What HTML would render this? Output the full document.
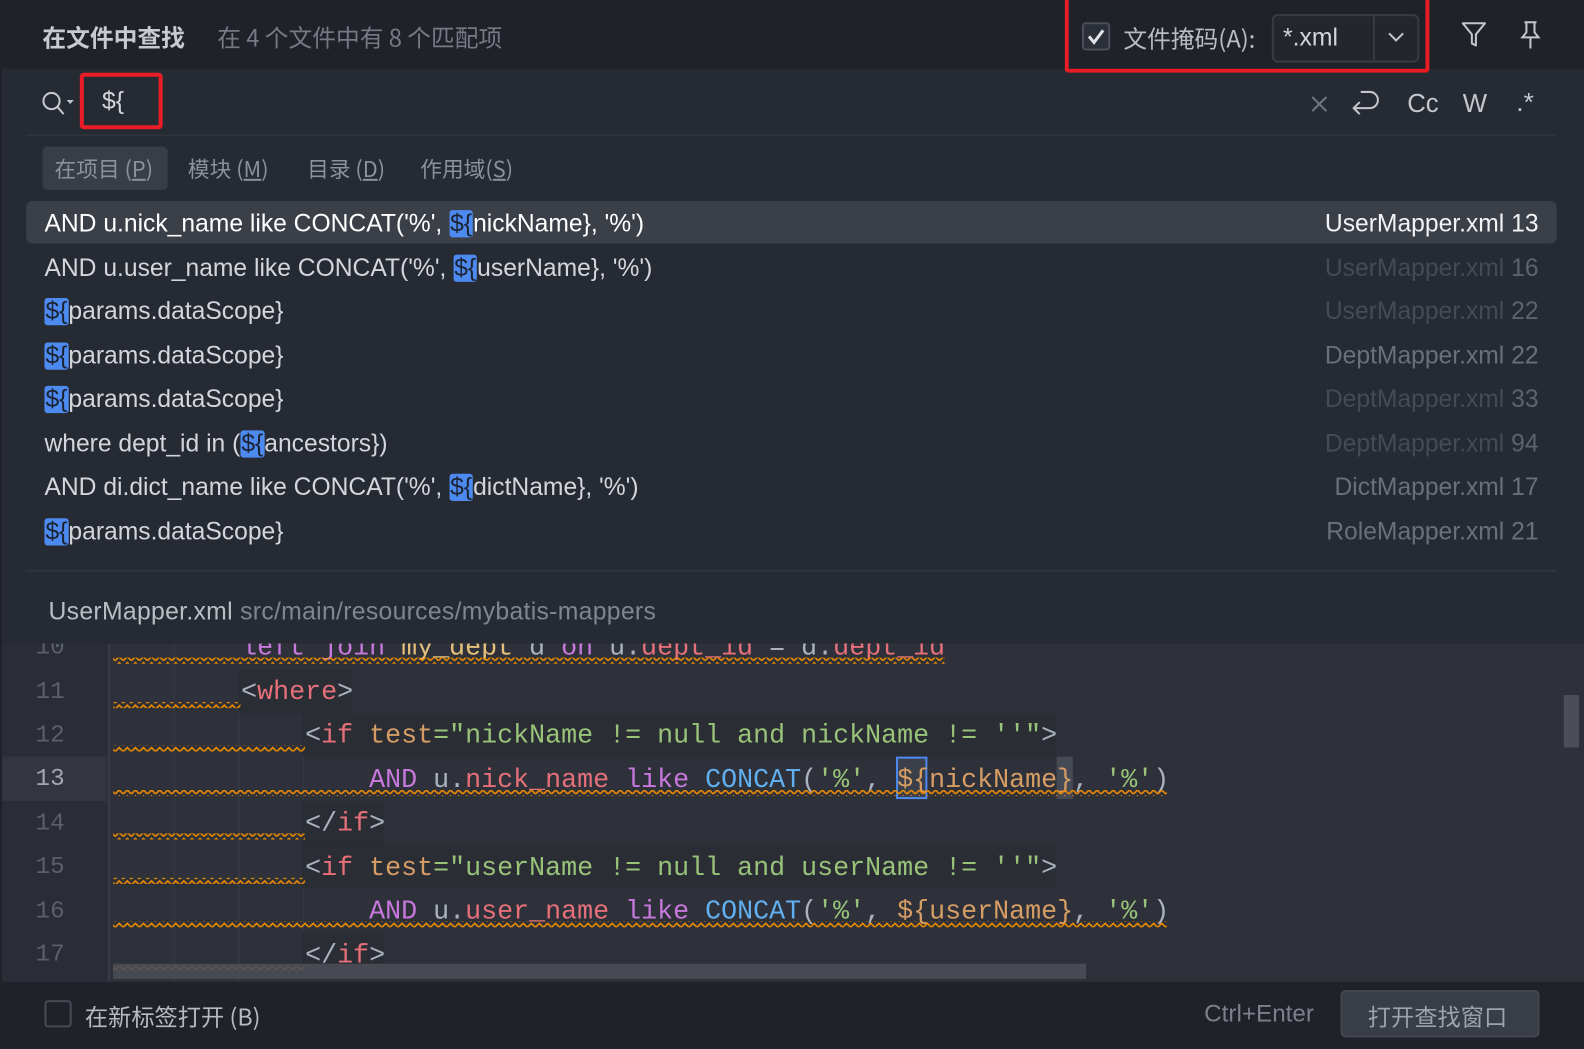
<!DOCTYPE html>
<html><head><meta charset="utf-8"><style>
*{margin:0;padding:0;box-sizing:border-box}
html,body{width:1584px;height:1048px;overflow:hidden;background:#262a32}
#w{position:absolute;left:0;top:0;width:1568px;height:1038px;transform:scale(1.0102);transform-origin:0 0;font-family:"Liberation Sans","Noto Sans CJK SC",sans-serif;color:#d3d6dc}
.a{position:absolute;white-space:pre}
.cjk{font-family:"Noto Sans CJK SC","Liberation Sans",sans-serif}
.row{position:absolute;left:44px;height:43px;line-height:43px;font-size:24.4px;color:#d3d6dc}
.fn{position:absolute;right:45px;height:43px;line-height:43px;font-size:24.4px;color:#6a707b;text-align:right}
.m{background:#4d8af0;color:#1c2330;border-radius:3px;padding:0 1px}
.code{position:absolute;left:112px;font-family:"Liberation Mono",monospace;font-size:26.4px;line-height:43.5px;white-space:pre;color:#abb2bf}
.ln{position:absolute;left:0;width:62px;text-align:right;font-family:"Liberation Mono",monospace;font-size:24px;color:#5a606b;line-height:43.5px}
.t{color:#e5707a}.at{color:#d69d64}.s{color:#98c379}.k{color:#c678dd}.f{color:#61afef}.o{color:#d69d64}.g{color:#abb2bf}
</style></head><body><div id="w">
<div class="a" style="left:0;top:0;width:1568px;height:68px;background:#1f2229"></div>
<div class="a cjk" style="left:42px;top:19px;font-size:23.5px;font-weight:bold;color:#c7cad0">在文件中查找</div>
<div class="a cjk" style="left:215px;top:19px;font-size:23.5px;color:#757a84">在 4 个文件中有 8 个匹配项</div>
<div class="a" style="left:1054px;top:0;width:361px;height:72px;border:4px solid #ea1d27;border-top:none;border-radius:0 0 4px 4px"></div>
<div class="a" style="left:1071px;top:22px;width:28px;height:28px;border:2px solid #4a4f59;border-radius:4px;background:#2b2f37"></div>
<svg class="a" style="left:1073px;top:24px" width="24" height="24"><path d="M5 12 L10 18 L19 6" stroke="#dfe2e6" stroke-width="3" fill="none"/></svg>
<div class="a cjk" style="left:1112px;top:20px;font-size:23.5px;color:#b8bcc3">文件掩码(A):</div>
<div class="a" style="left:1259px;top:14px;width:146px;height:48px;border:2px solid #373b44;border-radius:6px;background:#23262d"></div>
<div class="a" style="left:1359px;top:15px;width:2px;height:46px;background:#373b44"></div>
<div class="a" style="left:1270px;top:24px;font-size:24.5px;color:#d3d6dc">*.xml</div>
<svg class="a" style="left:1372px;top:30px" width="20" height="14"><path d="M3 3 L10 10 L17 3" stroke="#c4c8ce" stroke-width="2" fill="none"/></svg>
<svg class="a" style="left:1446px;top:20px" width="26" height="28"><path d="M2 3 H24 L15 14 V25 L11 23 V14 Z" stroke="#c4c8ce" stroke-width="2" fill="none" stroke-linejoin="round"/></svg>
<svg class="a" style="left:1502px;top:20px" width="26" height="30"><path d="M7 2 H19 M9 2 V12 L5 17 H21 L17 12 V2 M13 17 V28" stroke="#c4c8ce" stroke-width="2" fill="none"/></svg>
<div class="a" style="left:0;top:68px;width:2px;height:970px;background:#1f2229"></div>
<svg class="a" style="left:40px;top:88px" width="36" height="30"><circle cx="11" cy="12" r="8" stroke="#c4c8ce" stroke-width="2" fill="none"/><path d="M17 18 L23 25" stroke="#c4c8ce" stroke-width="2"/><path d="M26 11 H33 L29.5 15 Z" fill="#c4c8ce"/></svg>
<div class="a" style="left:79px;top:72px;width:82px;height:56px;border:4px solid #ea1d27;border-radius:4px"></div>
<div class="a" style="left:101px;top:87px;font-size:24.5px;color:#d3d6dc">${</div>
<svg class="a" style="left:1297px;top:94px" width="18" height="18"><path d="M2 2 L16 16 M16 2 L2 16" stroke="#70757f" stroke-width="2"/></svg>
<svg class="a" style="left:1335px;top:86px" width="32" height="34"><path d="M12 5 H21 A8 8 0 0 1 21 21 H5 M11 15 L5 21 L11 27" stroke="#c4c8ce" stroke-width="2" fill="none"/></svg>
<div class="a" style="left:1393px;top:89px;font-size:25.5px;color:#c4c8ce">Cc</div>
<div class="a" style="left:1448px;top:89px;font-size:25.5px;color:#c4c8ce">W</div>
<div class="a" style="left:1501px;top:86px;font-size:26px;color:#c4c8ce">.*</div>
<div class="a" style="left:26px;top:133px;width:1515px;height:2px;background:#2f333b"></div>
<div class="a" style="left:42px;top:145px;width:124px;height:43px;background:#393d46;border-radius:5px"></div>
<div class="a cjk" style="left:54px;top:151px;font-size:21.5px;color:#8c919a">在项目 (<u>P</u>)</div>
<div class="a cjk" style="left:186px;top:151px;font-size:21.5px;color:#8c919a">模块 (<u>M</u>)</div>
<div class="a cjk" style="left:304px;top:151px;font-size:21.5px;color:#8c919a">目录 (<u>D</u>)</div>
<div class="a cjk" style="left:416px;top:151px;font-size:21.5px;color:#8c919a">作用域(<u>S</u>)</div>
<div class="a" style="left:26px;top:199px;width:1515px;height:42px;background:#3b3f48;border-radius:6px"></div>
<div class="row" style="top:200px;color:#fff">AND u.nick_name like CONCAT('%', <span class="m">${</span>nickName}, '%')</div>
<div class="fn" style="top:200px;color:#f2f3f5">UserMapper.xml 13</div>
<div class="row" style="top:244px">AND u.user_name like CONCAT('%', <span class="m">${</span>userName}, '%')</div>
<div class="fn" style="top:244px;color:#454a54">UserMapper.xml <span style="color:#5d626c">16</span></div>
<div class="row" style="top:287px"><span class="m">${</span>params.dataScope}</div>
<div class="fn" style="top:287px;color:#454a54">UserMapper.xml <span style="color:#5d626c">22</span></div>
<div class="row" style="top:331px"><span class="m">${</span>params.dataScope}</div>
<div class="fn" style="top:331px">DeptMapper.xml 22</div>
<div class="row" style="top:374px"><span class="m">${</span>params.dataScope}</div>
<div class="fn" style="top:374px;color:#454a54">DeptMapper.xml <span style="color:#5d626c">33</span></div>
<div class="row" style="top:418px">where dept_id in (<span class="m">${</span>ancestors})</div>
<div class="fn" style="top:418px;color:#454a54">DeptMapper.xml <span style="color:#5d626c">94</span></div>
<div class="row" style="top:461px">AND di.dict_name like CONCAT('%', <span class="m">${</span>dictName}, '%')</div>
<div class="fn" style="top:461px">DictMapper.xml 17</div>
<div class="row" style="top:505px"><span class="m">${</span>params.dataScope}</div>
<div class="fn" style="top:505px">RoleMapper.xml 21</div>
<div class="a" style="left:26px;top:564px;width:1515px;height:2px;background:#30343c"></div>
<div class="a" style="left:48px;top:592px;font-size:24.5px;letter-spacing:0.3px;color:#b9bdc4">UserMapper.xml <span style="color:#80858f">src/main/resources/mybatis-mappers</span></div>
<div class="a" style="left:2px;top:637px;width:1566px;height:335px;background:#2e3139;overflow:hidden">
 <div class="a" style="left:0;top:0;width:104px;height:335px;background:#2a2d35"></div>
 <div class="a" style="left:0;top:112px;width:104px;height:44px;background:#33363e"></div>
 <div class="a" style="left:298px;top:69px;width:746px;height:43px;background:#2a2d34"></div>
 <div class="a" style="left:298px;top:156px;width:80px;height:43px;background:#2a2d34"></div>
 <div class="a" style="left:298px;top:199px;width:746px;height:43px;background:#2a2d34"></div>
 <div class="a" style="left:298px;top:286px;width:80px;height:43px;background:#2a2d34"></div>
 <div class="a" style="left:234px;top:26px;width:112px;height:43px;background:#2a2d34"></div>
 <div class="a" style="left:105px;top:0;width:2px;height:335px;background:#383c45"></div>
 <div class="a" style="left:170px;top:0;width:1px;height:335px;background:#383c45"></div>
 <div class="a" style="left:234px;top:69px;width:1px;height:266px;background:#383c45"></div>
 <div class="a" style="left:298px;top:112px;width:1px;height:43px;background:#383c45"></div>
 <div class="a" style="left:298px;top:242px;width:1px;height:44px;background:#383c45"></div>
 <div class="a" style="left:885px;top:112px;width:31px;height:42px;border:2px solid #4d8af0;background:#3a3f4a"></div>
 <div class="a" style="left:1044px;top:112px;width:16px;height:42px;background:#454a55"></div>
 <div class="ln" style="top:-17px">10</div><div class="ln" style="top:27px">11</div><div class="ln" style="top:70px">12</div><div class="ln" style="top:113px;color:#a3a8b1">13</div><div class="ln" style="top:157px">14</div><div class="ln" style="top:200px">15</div><div class="ln" style="top:244px">16</div><div class="ln" style="top:287px">17</div>
 <div class="code" style="top:-17px;left:110px">        <span class="k">left join</span> <span style="color:#e5c07b">my_dept</span> <span class="g">d</span> <span class="k">on</span> <span class="g">u.</span><span class="t">dept_id</span> <span class="g">=</span> <span class="g">d.</span><span class="t">dept_id</span>
        <span class="g">&lt;</span><span class="t">where</span><span class="g">&gt;</span>
            <span class="g">&lt;</span><span class="t">if</span> <span class="at">test</span><span class="s">="nickName != null and nickName != ''"</span><span class="g">&gt;</span>
                <span class="k">AND</span> <span class="g">u.</span><span class="t">nick_name</span> <span class="k">like</span> <span class="f">CONCAT</span><span class="g">(</span><span class="s">'%'</span><span class="g">,</span> <span class="o">${nickName}</span><span class="g">,</span> <span class="s">'%'</span><span class="g">)</span>
            <span class="g">&lt;/</span><span class="t">if</span><span class="g">&gt;</span>
            <span class="g">&lt;</span><span class="t">if</span> <span class="at">test</span><span class="s">="userName != null and userName != ''"</span><span class="g">&gt;</span>
                <span class="k">AND</span> <span class="g">u.</span><span class="t">user_name</span> <span class="k">like</span> <span class="f">CONCAT</span><span class="g">(</span><span class="s">'%'</span><span class="g">,</span> <span class="o">${userName}</span><span class="g">,</span> <span class="s">'%'</span><span class="g">)</span>
            <span class="g">&lt;/</span><span class="t">if</span><span class="g">&gt;</span></div>
 <svg class="a" style="left:0;top:0" width="1566" height="335"><defs><pattern id="wv" width="8" height="6" patternUnits="userSpaceOnUse"><path d="M0 5 L4 1 L8 5" stroke="#f08c00" stroke-width="1.6" fill="none"/></pattern></defs>
 <rect x="110" y="14" width="823" height="6" fill="url(#wv)"/>
 <rect x="110" y="58" width="126" height="6" fill="url(#wv)"/>
 <rect x="110" y="101" width="190" height="6" fill="url(#wv)"/>
 <rect x="110" y="145" width="1043" height="6" fill="url(#wv)"/>
 <rect x="110" y="188" width="190" height="6" fill="url(#wv)"/>
 <rect x="110" y="232" width="190" height="6" fill="url(#wv)"/>
 <rect x="110" y="275" width="1043" height="6" fill="url(#wv)"/>
 <rect x="110" y="319" width="190" height="6" fill="url(#wv)"/>
 </svg>
 <div class="a" style="left:110px;top:317px;width:963px;height:15px;background:#4b4e56;opacity:.9"></div>
 <div class="a" style="left:1546px;top:51px;width:15px;height:52px;background:#4b4e56"></div>
</div>
<div class="a" style="left:0;top:972px;width:1568px;height:66px;background:#1f2229"></div>
<div class="a" style="left:44px;top:990px;width:27px;height:27px;border:2px solid #454a54;border-radius:4px"></div>
<div class="a cjk" style="left:84px;top:988px;font-size:23px;color:#b6bac1">在新标签打开 (B)</div>
<div class="a" style="left:1192px;top:990px;font-size:24px;color:#7b808a">Ctrl+Enter</div>
<div class="a" style="left:1327px;top:980px;width:197px;height:47px;border:2px solid #43474f;border-radius:5px;background:#393d46"></div>
<div class="a cjk" style="left:1354px;top:988px;font-size:23px;color:#9da2ab">打开查找窗口</div>
</div></body></html>
